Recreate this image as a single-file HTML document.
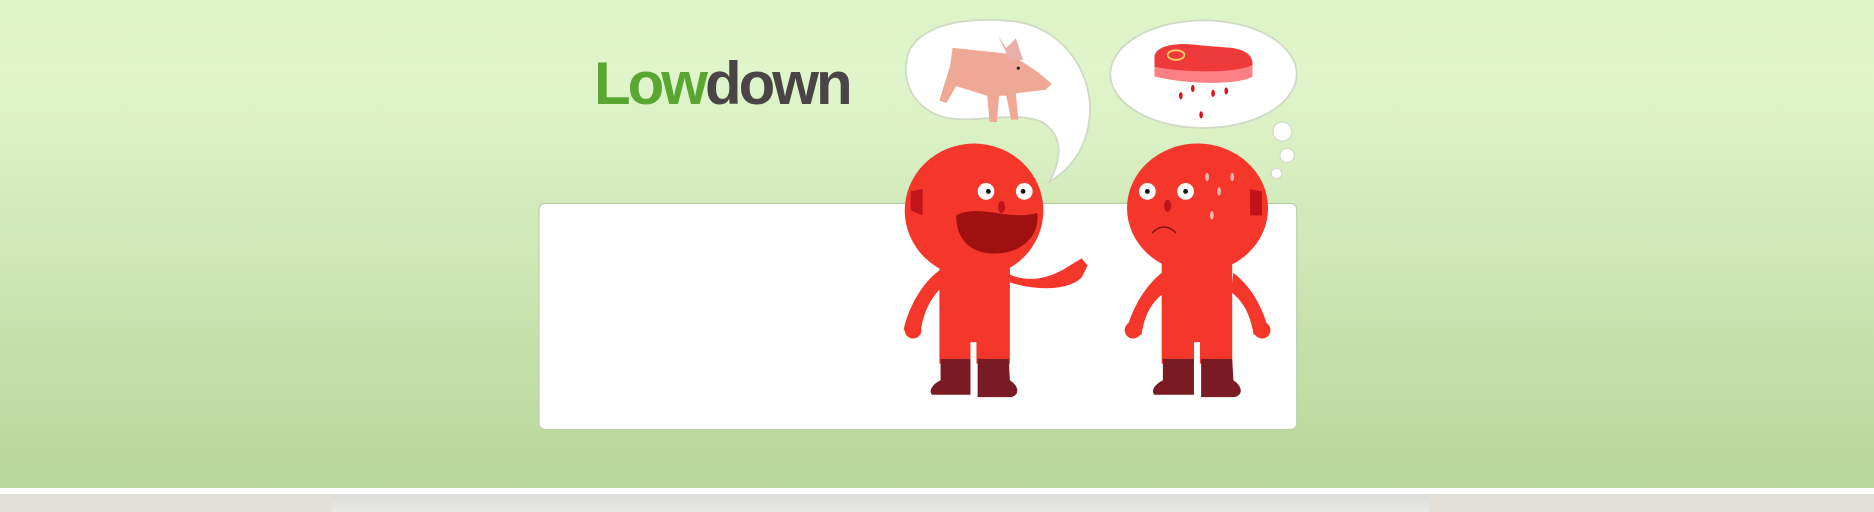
<!DOCTYPE html>
<html><head><meta charset="utf-8"><style>
html,body{margin:0;padding:0;width:1874px;height:512px;overflow:hidden;background:#fff}
svg{position:absolute;left:0;top:0}
.logo{position:absolute;left:594px;top:54px;font:bold 60px/1 "Liberation Sans",sans-serif;letter-spacing:-3px}
</style></head><body>
<svg width="1874" height="512" viewBox="0 0 1568 428" preserveAspectRatio="none">
<defs>
<linearGradient id="bg" x1="0" y1="0" x2="0" y2="1">
<stop offset="0" stop-color="#dcf3c6"/><stop offset="0.15" stop-color="#e0f5cb"/><stop offset="1" stop-color="#b7d69a"/></linearGradient>
<linearGradient id="gr" x1="0" y1="0" x2="0" y2="1"><stop offset="0" stop-color="#dcdcda"/><stop offset="1" stop-color="#e8e8e4"/></linearGradient>
</defs>
<rect width="1568" height="408" fill="url(#bg)"/>
<rect y="408" width="1568" height="5" fill="#fff"/>
<rect y="413" width="1568" height="15" fill="url(#gr)"/>
<rect y="413" width="278" height="15" fill="#e2e0d8"/>
<rect x="1196" y="413" width="372" height="15" fill="#e2e0d8"/>
<rect x="451" y="170" width="634" height="189" rx="5" fill="#fff" stroke="#b9cfa6" stroke-width="1"/>
<path d="M790,98 C760,90 752,60 762,40 C776,18 815,14 850,18 C890,24 912,60 912,90 C912,120 898,140 878,152 C890,130 888,112 872,102 C850,92 815,104 790,98Z" fill="#fff" stroke="#cfd9c4" stroke-width="1.5"/>
<path d="M797,40 L845,45 L868,60 L880,70 L875,75 L850,78 L852,100 L846,100 L842,80 L836,80 L834,102 L828,102 L826,80 L800,72 L792,86 L786,84 L795,55Z" fill="#f0a896"/>
<path d="M835,30 L842,40 L850,32 L856,50 L845,50Z" fill="#e8b0a8"/>
<circle cx="852" cy="57" r="1.3" fill="#222"/>
<ellipse cx="1007" cy="62" rx="78" ry="45" fill="#fff" stroke="#cfd9c4" stroke-width="1.5"/>
<circle cx="1073" cy="110" r="8" fill="#fff" stroke="#cfd9c4"/>
<circle cx="1077" cy="130" r="6" fill="#fff" stroke="#cfd9c4"/>
<circle cx="1068" cy="145" r="4.5" fill="#fff" stroke="#cfd9c4"/>
<path d="M966,48 C966,38 985,35 1005,38 L1030,40 C1045,42 1048,48 1048,54 L1048,64 C1040,70 1000,72 966,64Z" fill="#fc7f86"/>
<path d="M966,48 C966,38 985,35 1005,38 L1030,40 C1045,42 1048,48 1048,54 C1040,60 1000,62 966,56Z" fill="#ee3a3a"/>
<ellipse cx="984" cy="46" rx="7" ry="4" fill="none" stroke="#f7d060" stroke-width="1.5"/>
<g fill="#e0101a"><ellipse cx="988" cy="80" rx="1.5" ry="3"/><ellipse cx="998" cy="74" rx="1.5" ry="3"/><ellipse cx="1015" cy="78" rx="1.5" ry="3"/><ellipse cx="1026" cy="76" rx="1.5" ry="3"/><ellipse cx="1005" cy="96" rx="1.5" ry="3"/></g>
<g fill="#f5372b">
<path d="M786,226 C770,238 760,258 756,276 L770,280 C772,262 778,250 788,240Z"/>
<circle cx="764" cy="276" r="7"/>
<path d="M842,228 C860,238 880,232 895,222 L905,216 L910,222 L905,232 C895,242 870,244 845,236Z"/>
<rect x="786" y="212" width="59" height="92"/>
<ellipse cx="815" cy="176" rx="58" ry="56"/>
</g>
<rect x="812" y="286" width="5" height="20" fill="#fff"/>
<path d="M762,160 L772,158 L772,180 L762,176Z" fill="#c0141a"/>
<path d="M800,180 C820,170 845,185 868,178 C870,200 852,212 832,212 C812,212 800,200 800,180Z" fill="#a01010"/>
<circle cx="825" cy="160" r="7" fill="#fff"/><circle cx="857" cy="160" r="7" fill="#fff"/>
<circle cx="827" cy="160" r="2" fill="#111"/><circle cx="856" cy="160" r="2" fill="#111"/>
<ellipse cx="838" cy="173" rx="3" ry="5" fill="#c0141a"/>
<g fill="#7a1a22"><path d="M787,300 L812,300 L812,330 L780,330 C776,326 782,320 787,318Z"/><path d="M818,300 L844,300 L845,318 C852,322 854,330 846,332 L818,332Z"/></g>
<g fill="#f5372b">
<path d="M972,228 C955,242 946,262 942,278 L955,280 C958,262 964,252 975,244Z"/>
<circle cx="948" cy="276" r="7"/>
<path d="M1032,228 C1050,242 1058,262 1062,278 L1049,280 C1046,262 1040,252 1030,244Z"/>
<circle cx="1056" cy="276" r="7"/>
<rect x="972" y="210" width="59" height="94"/>
<ellipse cx="1002" cy="174" rx="59" ry="54"/>
</g>
<rect x="999" y="286" width="5" height="20" fill="#fff"/>
<path d="M1046,158 L1056,160 L1056,180 L1046,180Z" fill="#c0141a"/>
<circle cx="960" cy="160" r="7" fill="#fff"/><circle cx="992" cy="160" r="7" fill="#fff"/>
<circle cx="960" cy="160" r="2" fill="#111"/><circle cx="992" cy="160" r="2" fill="#111"/>
<ellipse cx="977" cy="172" rx="3" ry="5" fill="#c0141a"/>
<path d="M964,195 C970,188 978,188 984,195" fill="none" stroke="#8a1010" stroke-width="1.2"/>
<g fill="#fbb3b0"><ellipse cx="1010" cy="148" rx="1.6" ry="3.5"/><ellipse cx="1031" cy="148" rx="1.6" ry="3.5"/><ellipse cx="1020" cy="160" rx="1.6" ry="3.5"/><ellipse cx="1014" cy="180" rx="1.6" ry="3.5"/></g>
<g fill="#7a1a22"><path d="M973,300 L999,300 L999,330 L966,330 C962,326 968,320 973,318Z"/><path d="M1005,300 L1031,300 L1032,318 C1039,322 1041,330 1033,332 L1005,332Z"/></g>
</svg>
<div class="logo"><span style="color:#5aa632">Low</span><span style="color:#4a4446">down</span></div>
</body></html>
